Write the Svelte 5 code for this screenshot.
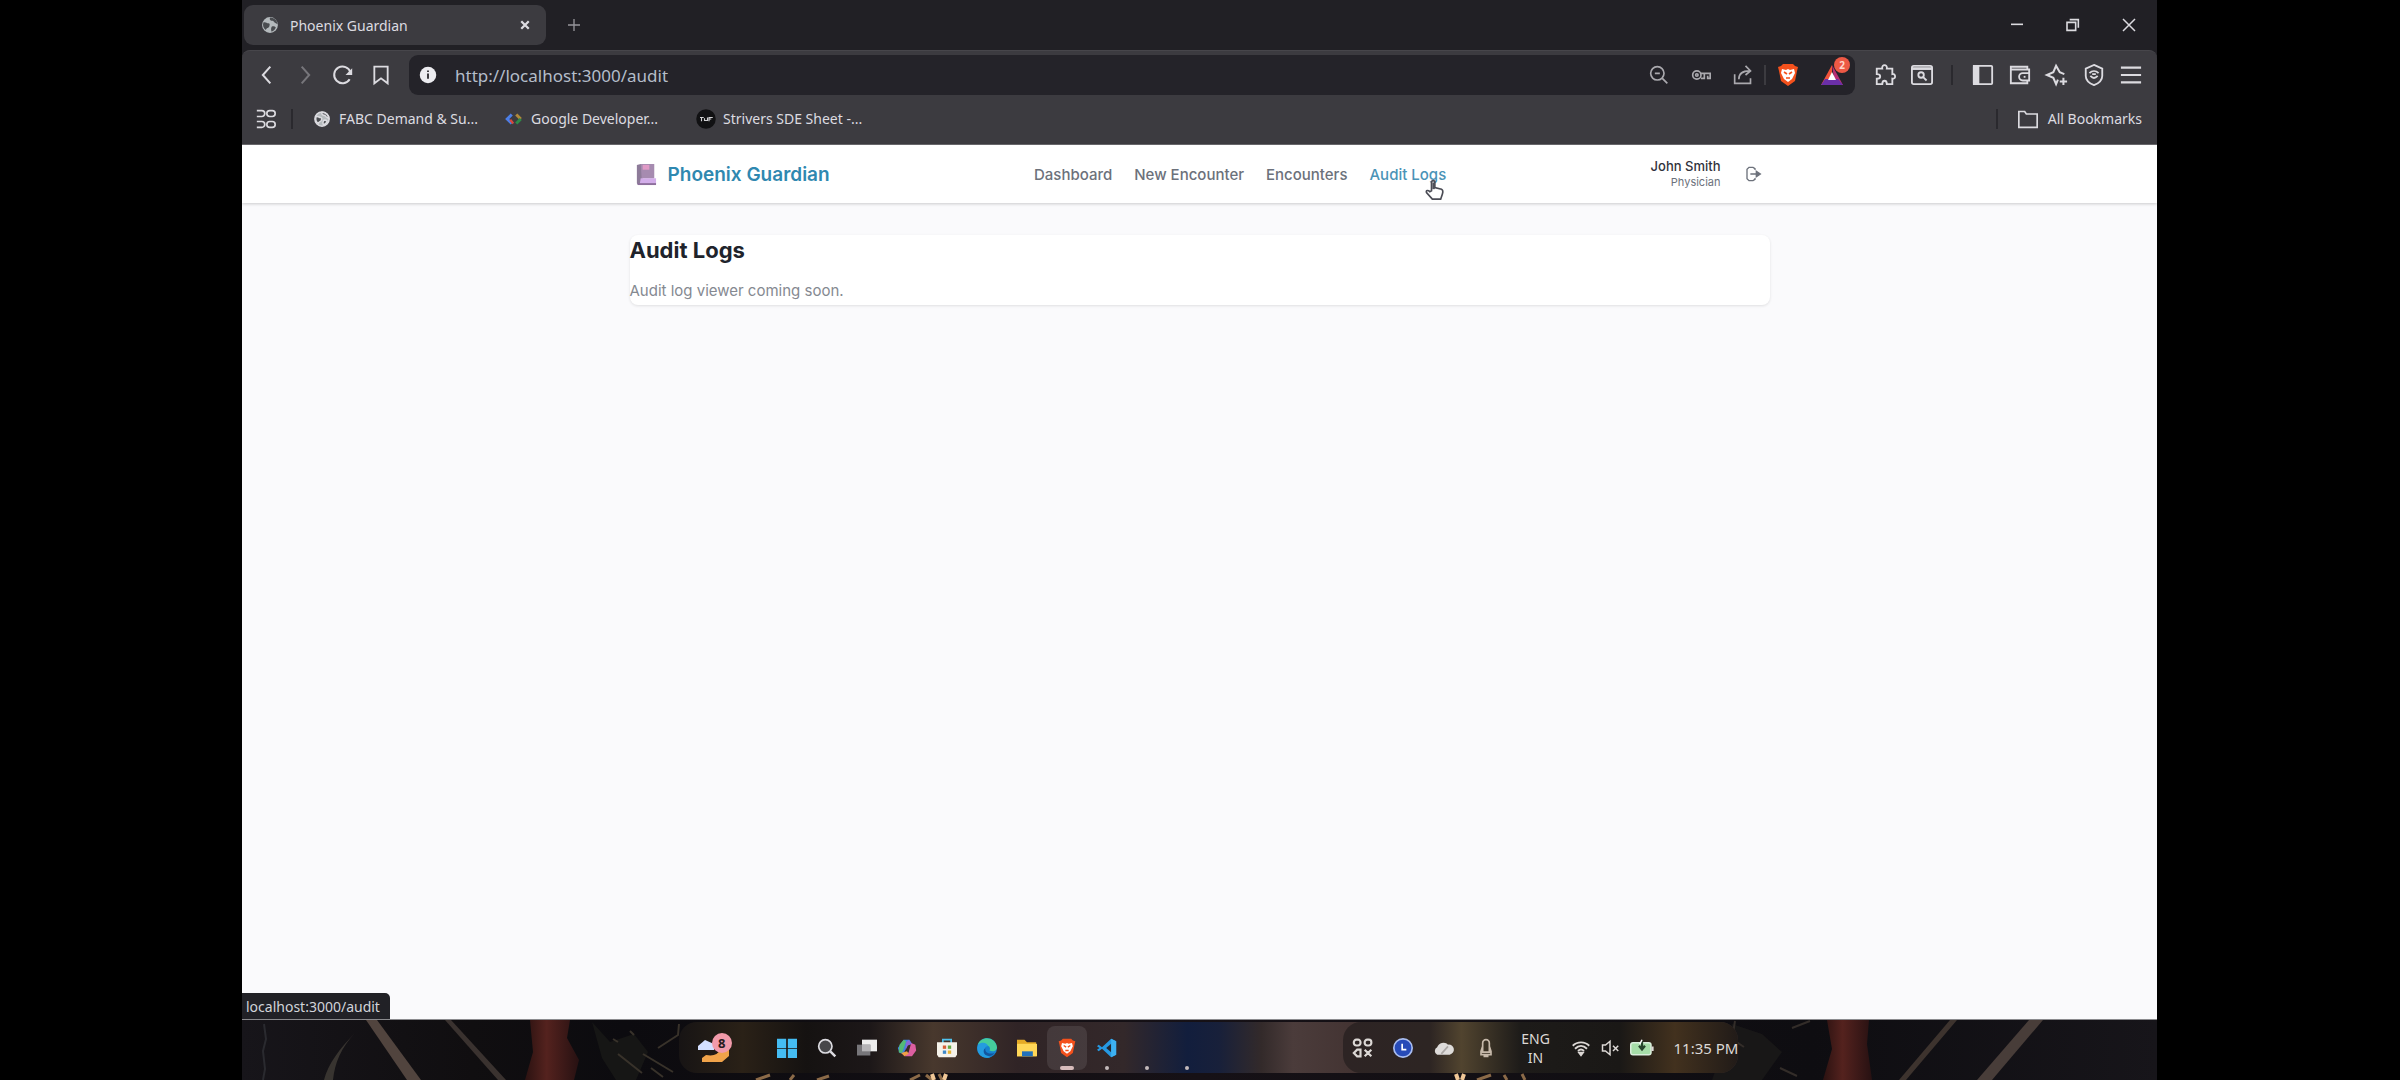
<script lang="ts">
  const tabTitle = 'Phoenix Guardian';
  let address = $state('http://localhost:3000/audit');

  const globe =
    '<circle cx="12" cy="12" r="9.5" fill="#b4b9bc"/><path d="M4 9c3-1 4 1 6 1s2 2 1 4-3 1-4 4c-3-2-4-5-3-9zM12 3c-1 3 1 4 3 4s2 3 4 3l2 1c0-4-4-8-9-8zM14 14c2-1 4 0 5 1-1 3-3 4-5 5-1-2-1-4 0-6z" fill="#4a4c50"/>';

  const icons: Record<string, string> = {
    globe,
    close: '<path d="M7 7l10 10M17 7L7 17" stroke-width="3"/>',
    plus: '<path d="M12 3v18M3 12h18" stroke-width="2"/>',
    minimize: '<path d="M3 11h18" stroke-width="2.4"/>',
    restore: '<path d="M3 8h13v12H3zM7 4h13v12" stroke-width="2.4"/>',
    exit: '<path d="M3 3l18 18M21 3L3 21" stroke-width="2.2"/>',
    back: '<path d="M16 2L7 12l9 10" stroke-width="2.4"/>',
    forward: '<path d="M8 2l9 10-9 10" stroke-width="2.4"/>',
    reload: '<path d="M20 17a10 10 0 1 1 1-8" stroke-width="2.4"/><path d="M23 4v8h-8z" fill="currentColor" stroke="none"/>',
    bookmark: '<path d="M4 2h16v20l-8-6-8 6z" stroke-width="2.2"/>',
    info: '<circle cx="12" cy="12" r="11" fill="#ececf0" stroke="none"/><path d="M12 10v7M12 6v2" stroke="#28272c" stroke-width="2.4"/>',
    apps: '<path d="M1 2h6a3.5 3.5 0 0 1 0 7H1M1 15h6a3.5 3.5 0 0 1 0 7H1"/><rect x="13" y="2" width="10" height="7" rx="3.5"/><rect x="13" y="15" width="10" height="7" rx="3.5"/>',
    code: '<path d="M9 6l-6 6 6 6" stroke="#4c7fe8" stroke-width="4"/><path d="M7 13l4 5" stroke="#d8483c" stroke-width="3"/><path d="M15 6l6 6" stroke="#b08a3a" stroke-width="4"/><path d="M21 12l-6 6" stroke="#2d8a48" stroke-width="4"/>',
    tuf: '<circle cx="12" cy="12" r="13" fill="#111113" stroke="none"/><path d="M4 10h5M6 10v5M10 11v3h4v-4M16 15v-5h5M16 12h3" stroke="#d0d0d2" stroke-width="1.5"/>',
    zoom: '<circle cx="10" cy="10" r="8"/><path d="M16 16l6 6M7 10h6"/>',
    key: '<circle cx="7" cy="12" r="5"/><circle cx="7" cy="12" r="1.5"/><path d="M12 10h11v6h-3v-3M16 10v6h-4"/>',
    share: '<path d="M2 11v11h19v-6M7 17c0-7 4-10 13-10M15 1l6 6-6 5"/>',
    brave: '<path d="M7 1h10l2 2 3 1-1 4-2 10-7 5-7-5L3 8 2 4l3-1z" fill="#f4511c" stroke="none"/><path d="M6 6l4 1 2-1 2 1 4-1 1 4-3 6-4 3-4-3-3-6z" fill="#fff" stroke="none"/><path d="M8 9l3 2M16 9l-3 2M10 15h4" stroke="#f4511c" stroke-width="1.6"/>',
    bat: '<path d="M12 2L1 22h11z" fill="#f2533a" stroke="none"/><path d="M12 2l11 20h-8z" fill="#b82f74" stroke="none"/><path d="M1 22h22l-5-6H5z" fill="#6b2fa8" stroke="none"/><path d="M12 9l4 8H8z" fill="#fff" stroke="none"/>',
    puzzle: '<path d="M3 5h6c-1-5 6-5 5 0h6v6c4-1 4 6 0 5v6h-6c0-5-5-5-5 0H3v-6c5 0 5-5 0-5z"/>',
    finder: '<rect x="1" y="2" width="22" height="20" rx="2"/><path d="M1 5h22" stroke-width="3"/><circle cx="11" cy="12" r="3"/><path d="M13 14l4 4"/>',
    panel: '<rect x="2" y="2" width="20" height="20" rx="1"/><path d="M2 2h5v20H2z" fill="currentColor"/>',
    wallet: '<path d="M20 7V3H2v18h18v-3M2 6h20v3M22 18h-7a4 4 0 0 1 0-8h7z"/><path d="M16 14h2"/>',
    spark: '<path d="M20 11l-5-2-4-7-3 7-7 3 7 3 3 7 2-5M19 15v8M15 19h8" stroke-width="2.2"/>',
    shield: '<path d="M12 1l9 4v8c0 5-4 8-9 10-5-2-9-5-9-10V5z"/><path d="M7 10c3-3 7-3 10 0M8 13c3 3 5 3 8 0M10 11h4"/>',
    menu: '<path d="M1 4h22M1 12h22M1 20h22" stroke-width="2.4"/>',
    folder: '<path d="M1 3h7l2 3h13v16H1z"/>',
    book: '<path d="M3 2l4-1h14v15H9v6l-5 1-1-2z" fill="#8d7b99" stroke="none"/><path d="M7 1h14v15H8z" fill="#a68bb0" stroke="none"/><path d="M9 2h7v5H9z" fill="#e09ac6" stroke="none"/><path d="M7 16h16v6H6z" fill="#d3aeea" stroke="none"/><path d="M4 22h19" stroke="#8d6f9c"/>',
    logout: '<path d="M15 6V4l-3-2H6L3 5v14l3 3h6l3-2v-2M8 12h13"/><path d="M17 8l6 4-6 4z" fill="currentColor"/>',
    windows: '<g stroke="none" fill="#45bdf3"><path d="M0 1h11v11H0zM13 1h11v11H13zM0 13h11v11H0zM13 13h11v11H13z"/></g>',
    search: '<circle cx="10" cy="10" r="8" fill="#47474a"/><path d="M16 16l6 6" stroke-width="3"/>',
    tasks: '<path d="M6 2h18v14H6z" fill="#eee" stroke="none"/><path d="M0 8h16v13H0z" fill="#77767a" stroke="none"/><path d="M6 8h10v8H6z" fill="#b5b4b7" stroke="none"/>',
    copilot: '<g stroke="none"><path d="M8 2h7l3 5-6 2-4 10-5-1-2-6z" fill="#3e83dd"/><path d="M3 8l5-6 3 2-5 14-4-1z" fill="#54b976"/><path d="M17 6l5 2 1 7-5 7H9l5-5z" fill="#dc5ea0"/><path d="M9 22l-4-4 7-2 2 3z" fill="#efa047"/><path d="M14 2l4 5-5 2-3 6 1-10z" fill="#8865d8"/></g>',
    store: '<path d="M7 6V2h10v4" stroke="#4fc3ef"/><path d="M0 5h24v15l-2 3H2l-2-3z" fill="#f5f2ea" stroke="none"/><path d="M7 9h4v4H7z" fill="#d65f38" stroke="none"/><path d="M13 9h4v4h-4z" fill="#65a844" stroke="none"/><path d="M7 15h4v4H7z" fill="#3d88c9" stroke="none"/><path d="M13 15h4v4h-4z" fill="#e5b437" stroke="none"/>',
    edge: '<g stroke="none"><circle cx="12" cy="12" r="12" fill="#1683d0"/><path d="M1 8C5-3 22-2 24 11c0 5-6 6-9 4 3-6-6-9-14-7z" fill="#45cd9d"/><path d="M1 8c5-4 12-2 12 2-6 0-5 10 3 13C6 26-2 18 1 8z" fill="#249ce0"/><path d="M10 12c-1 6 5 8 11 6-4 6-13 4-13-2 0-2 1-3 2-4z" fill="#12559d"/></g>',
    files: '<g stroke="none"><path d="M0 2h9l3 3h11v17H0z" fill="#e5aa26"/><path d="M0 7h24v15H0z" fill="#ffd758"/><path d="M6 16h13v6H6z" fill="#2271ba"/></g>',
    vscode: '<path d="M17 1l6 3v16l-6 3L6 13l-4 3-2-2 3-2-3-2 2-2 4 3z" fill="#2699e3" stroke="none"/><path d="M17 7v10l-6-5z" fill="#24272f" stroke="none"/><path d="M17 1l6 3v16l-6 3z" fill="#3db1f2" stroke="none"/>',
    grid: '<g stroke-width="2.6"><rect x="1" y="2" width="8" height="7" rx="3"/><rect x="14" y="2" width="8" height="7" rx="3"/><path d="M9 14v8H5l-4-4 4-4zM14 14l8 8M22 14l-8 8"/></g>',
    clock: '<circle cx="12" cy="12" r="11" fill="#274bb8" stroke="#a9bdf0"/><path d="M11 7v7h5" stroke="#fff"/>',
    cloud: '<path d="M5 20a5 5 0 0 1 0-9 8 8 0 0 1 13-3 6 6 0 0 1 2 12z" fill="#dedcda" stroke="none"/><path d="M10 19l8-9" stroke="#aaa6a4"/>',
    mic: '<path d="M8 6a4 4 0 0 1 8 0v11H8zM8 10l-2 6v4h12v-4l-2-6M10 20v2h4v-2"/>',
    wifi: '<path d="M1 9c6-6 16-6 22 0M4 13c5-5 11-5 16 0M8 16c3-3 5-3 8 0" stroke-width="2.5"/><path d="M9 18l3 4 3-4z" fill="currentColor"/>',
    mute: '<path d="M2 8h4l6-5v18l-6-5H2zM16 9l7 7M23 9l-7 7"/>',
    battery: '<rect x="0" y="5" width="27" height="16" rx="3" fill="#a6dda8" stroke="#d9eedb"/><path d="M29 10v6" stroke-width="3"/><path d="M15 3v9M11 9l4 5 4-5" stroke="#26442b" stroke-width="3"/><path d="M15 1l-3 6" stroke="#fff"/>',
    hand: '<path d="M9 13V3c0-3 4-3 4 0v6l8 2c2 1 2 3 1 6l-2 6H10l-7-8c-1-3 2-3 4-1z" fill="#fff" stroke="#4b4c55"/><path d="M10 3h3v8h-3z" fill="#50515a" stroke="none"/>'
  };

  const bookmarks = [
    { icon: 'globe', label: 'FABC Demand & Su...' },
    { icon: 'code', label: 'Google Developer...' },
    { icon: 'tuf', label: 'Strivers SDE Sheet -...' }
  ];
  const links = ['Dashboard', 'New Encounter', 'Encounters', 'Audit Logs'];
  const pinned = ['windows', 'search', 'tasks', 'copilot', 'store', 'edge', 'files', 'brave', 'vscode'];
  const panelTools = ['panel', 'wallet', 'spark', 'shield', 'menu'];
</script>

{#snippet icon(name: string)}
  <svg class="icon" class:wide={name === 'battery'} viewBox={name === 'battery' ? '-1 0 32 24' : '0 0 24 24'} aria-hidden="true">{@html icons[name]}</svg>
{/snippet}

<div class="screen">
  <div class="browser">
    <div class="tabs">
      <div class="tab">
        {@render icon('globe')}
        <span>{tabTitle}</span>
        <button class="mini" aria-label="Close tab">{@render icon('close')}</button>
      </div>
      <button class="mini new" aria-label="New tab">{@render icon('plus')}</button>
      <div class="controls">
        <button aria-label="Minimize">{@render icon('minimize')}</button>
        <button aria-label="Restore">{@render icon('restore')}</button>
        <button aria-label="Close">{@render icon('exit')}</button>
      </div>
    </div>

    <div class="chrome">
      <div class="toolbar">
        <div class="history">
          <button aria-label="Back">{@render icon('back')}</button>
          <button class="dim" aria-label="Forward">{@render icon('forward')}</button>
          <button aria-label="Reload">{@render icon('reload')}</button>
          <button aria-label="Bookmark">{@render icon('bookmark')}</button>
        </div>
        <div class="address">
          <button class="mini" aria-label="Site information">{@render icon('info')}</button>
          <input aria-label="Address" bind:value={address} spellcheck="false" />
          <div class="actions">
            <button aria-label="Zoom">{@render icon('zoom')}</button>
            <button aria-label="Passwords">{@render icon('key')}</button>
            <button aria-label="Share">{@render icon('share')}</button>
          </div>
          <i class="rule soft"></i>
          <button class="logo" aria-label="Brave Shields">{@render icon('brave')}</button>
          <button class="logo" aria-label="Brave Rewards">{@render icon('bat')}<b>2</b></button>
        </div>
        <div class="tools">
          <button aria-label="Extensions">{@render icon('puzzle')}</button>
          <button aria-label="Search tabs">{@render icon('finder')}</button>
        </div>
        <i class="rule"></i>
        <div class="tools">
          {#each panelTools as tool}
            <button aria-label={tool}>{@render icon(tool)}</button>
          {/each}
        </div>
      </div>
      <div class="bookmarks">
        <button class="apps" aria-label="Apps">{@render icon('apps')}</button>
        <i class="rule"></i>
        <div class="saved">
          {#each bookmarks as item}
            <a href="#{item.icon}">{@render icon(item.icon)}{item.label}</a>
          {/each}
        </div>
        <i class="rule"></i>
        <button class="all">{@render icon('folder')}All Bookmarks</button>
      </div>
    </div>

    <div class="page">
      <header>
        <div class="container bar">
          <a class="brand" href="#home">{@render icon('book')}Phoenix Guardian</a>
          <nav>
            {#each links as link}
              <a href="#{link}" class:active={link === 'Audit Logs'}>{link}{#if link === 'Audit Logs'}<span class="pointer">{@render icon('hand')}</span>{/if}</a>
            {/each}
          </nav>
          <div class="account">
            <div class="user"><strong>John Smith</strong><span>Physician</span></div>
            <button aria-label="Log out">{@render icon('logout')}</button>
          </div>
        </div>
      </header>
      <main class="container">
        <section>
          <h1>Audit Logs</h1>
          <p>Audit log viewer coming soon.</p>
        </section>
      </main>
      <div class="status">localhost:3000/audit</div>
    </div>

    <footer>
      <svg class="wallpaper" viewBox="0 0 1915 60" preserveAspectRatio="none" aria-hidden="true">
        <defs>
          <linearGradient id="night">
            <stop offset="0" stop-color="#17151a" /><stop offset=".12" stop-color="#100e10" />
            <stop offset=".2" stop-color="#0c0b0f" /><stop offset=".5" stop-color="#161116" />
            <stop offset=".82" stop-color="#0e0d11" /><stop offset="1" stop-color="#17151a" />
          </linearGradient>
          <linearGradient id="ember"><stop offset="0" stop-color="#2b1211" /><stop offset=".4" stop-color="#54221e" /><stop offset="1" stop-color="#271112" /></linearGradient>
        </defs>
        <rect width="1915" height="60" fill="url(#night)" />
        <path d="M124 0h11l44 60h-14z" fill="#51443e" />
        <path d="M203 0h6l55 60h-8z" fill="#3a322f" />
        <path d="M113 13C98 28 86 44 82 60h9c2-18 8-32 22-47z" fill="#383430" />
        <path d="M22 4l2 15-3 12 2 18-2 11" fill="none" stroke="#2a2a2f" stroke-width="2" />
        <path d="M288 0h40l-3 18 12 22-5 20h-49l8-28z" fill="url(#ember)" />
        <path d="M350 2l18 20 24-8 14 18-12 28h-20l-14-22z" fill="#161615" />
        <path d="M371 19l5 3M388 11l4 4M416 28l20-13 1-11M401 34l30 18M376 34l24 19M409 48l12 9" fill="none" stroke="#38322a" stroke-width="2" />
        <path d="M1708 0h7l-51 60h-7z" fill="#3d332e" />
        <path d="M1787 0h14l-51 60h-15z" fill="#483d39" />
        <path d="M1585 0h42l-2 24 5 36h-49l9-31z" fill="url(#ember)" />
        <path d="M1490 4l30 10 20 18-20 28h-50z" fill="#181717" />
        <path d="M1493 1l-3 18 12 8M1550 8l18-7M1538 48l17 8" fill="none" stroke="#332d29" stroke-width="2" />
        <path d="M514 60l14-5M548 60l4-5M575 60l12-4M668 60l10-5M684 55l6 5M697 54l3 6M1235 60l14-5M1262 55l3 5M1280 54l3 6" fill="none" stroke="#8b6a48" stroke-width="3" />
        <path d="M690 54l2 6M704 54l-2 6M1214 54l2 6M1222 54l-2 6" fill="none" stroke="#f0c796" stroke-width="4" />
      </svg>
      <div class="dock">
        <div class="weather">
          <svg viewBox="0 0 36 32" aria-label="Weather"><path d="M9 23q11 2 14-5h9v6l-7 6H5v-4z" fill="#f0a34a" /><path d="M1 14l7-6 9 4v6H1z" fill="#d4dfff" /><circle cx="25" cy="11" r="10" fill="#f19aaa" /><text x="21" y="16">8</text></svg>
        </div>
        <div class="pinned">
          {#each pinned as app}
            <button class:current={app === 'brave'} class:running={app === 'vscode'} aria-label={app}>{@render icon(app)}</button>
          {/each}
          <button class="running" aria-label="Background app"></button>
          <button class="running" aria-label="Background task"></button>
        </div>
        <div class="tray">
          <button aria-label="Quick apps">{@render icon('grid')}</button>
          <button aria-label="Clock">{@render icon('clock')}</button>
          <button aria-label="Cloud">{@render icon('cloud')}</button>
          <button class="mic" aria-label="Microphone">{@render icon('mic')}</button>
          <button class="language">ENG<br />IN</button>
          <div class="system">{@render icon('wifi')}{@render icon('mute')}{@render icon('battery')}</div>
          <time>11:35 PM</time>
        </div>
      </div>
    </footer>
  </div>
</div>

<style>
  :global(body) { background: #000; }
  * { box-sizing: border-box; }
  button, input { font: inherit; color: inherit; background: none; border: 0; padding: 0; margin: 0; outline: 0; }
  a { color: inherit; text-decoration: none; }
  button { display: flex; align-items: center; justify-content: center; position: relative; flex: none; }
  .icon { display: block; width: 20px; height: 20px; flex: none; fill: none; stroke: currentColor; stroke-width: 2; overflow: visible; }
  .icon.wide { width: 26px; }
  .screen { min-height: 100vh; padding: 0 243px 0 242px; display: flex; background: #000; font-family: "Noto Sans", sans-serif; }
  .browser { flex: 1; min-width: 0; display: flex; flex-direction: column; background: #212025; color: #dcdbe0; font-size: 14px; }

  .tabs { display: flex; align-items: center; height: 50px; padding: 0 0 0 2px; }
  .tab { display: flex; align-items: center; gap: 10px; width: 302px; height: 40px; border-radius: 9px; background: #3c3b40; padding: 0 12px 0 16px; }
  .tab span { flex: 1; }
  .mini .icon { width: 16px; height: 16px; }
  .tab .icon { width: 20px; height: 20px; stroke: none; }
  .tab .mini .icon { width: 18px; height: 18px; stroke: currentColor; }
  .new { margin-left: 20px; color: #96959a; }
  .controls { display: flex; margin-left: auto; }
  .controls button { width: 56px; height: 40px; }
  .controls .icon { width: 16px; height: 16px; }

  .chrome { background: #3c3b40; border-top: 1px solid #47464b; border-bottom: 1px solid #6b6a6e; border-radius: 8px 8px 0 0; }
  .toolbar { display: flex; align-items: center; height: 48px; padding: 0 8px 0 6px; }
  .history { display: flex; width: 161px; }
  .history button { width: 38px; }
  .dim { color: #77767b; }
  .address { flex: 1; min-width: 0; display: flex; align-items: center; height: 40px; padding: 0 1px 0 10px; border-radius: 9px; background: #242329; }
  .address .mini .icon { width: 18px; height: 18px; }
  .address input { flex: 1; min-width: 0; margin-left: 18px; font-size: 17px; color: #b4bdc9; }
  .actions { display: flex; color: #aaa9ae; }
  .actions button { width: 42px; }
  .rule { width: 2px; height: 20px; background: #2a292e; flex: none; }
  .rule.soft { background: #3c3b40; }
  .logo { width: 44px; }
  .logo .icon { width: 24px; height: 24px; }
  .logo b { position: absolute; top: -6px; right: 4px; width: 16px; height: 16px; border-radius: 50%; background: #ed5945; color: #ffd5cc; font-size: 10px; line-height: 16px; text-align: center; }
  .tools { display: flex; margin: 0 11px; }
  .tools button { width: 37px; }
  .tools .icon { width: 22px; height: 22px; }
  .tools:last-child { margin-right: 0; }

  .bookmarks { display: flex; align-items: center; height: 45px; padding: 0 15px 6px 13px; }
  .apps { width: 22px; margin-right: 14px; }
  .saved { flex: 1; display: flex; margin-left: 20px; }
  .saved a { display: flex; align-items: center; gap: 8px; width: 192px; white-space: nowrap; }
  .saved .icon { width: 18px; height: 18px; }
  .all { gap: 10px; margin-left: 20px; }

  .page { flex: 1; position: relative; background: #fafafc; border-bottom: 1px solid #8b8b8e; font-family: Inter, sans-serif; color: #6c717b; }
  .container { max-width: 1140px; margin: 0 auto; }
  header { background: #fff; box-shadow: 0 1px 3px #00000030; }
  .bar { display: flex; align-items: center; justify-content: space-between; height: 58px; padding: 0 9px 0 4px; }
  .brand { display: flex; align-items: center; gap: 11px; color: #2f88b0; font-size: 19px; font-weight: 600; }
  .brand .icon { width: 23px; height: 23px; }
  nav { display: flex; gap: 22px; font-size: 15px; font-weight: 500; }
  nav a { position: relative; }
  .active { color: #4a93b7; }
  .pointer { position: absolute; right: 2px; top: 14px; }
  .pointer .icon { width: 20px; height: 22px; }
  .account { display: flex; align-items: center; gap: 24px; }
  .user { text-align: right; display: flex; flex-direction: column; font-size: 11px; line-height: 16px; }
  .user strong { font-size: 13px; font-weight: 500; color: #30323c; }
  .account .icon { width: 16px; height: 16px; }
  section { margin-top: 32px; padding: 0 0 4px; background: #fff; border-radius: 8px; box-shadow: 0 1px 3px #0000001c; }
  h1 { margin: 0; font-size: 22px; line-height: 30px; font-weight: 700; color: #20232b; }
  p { margin: 16px 0 0; font-size: 15px; line-height: 20px; color: #858991; }
  .status { position: absolute; left: 0; bottom: 0; height: 26px; padding: 0 10px 0 4px; border-radius: 0 5px 0 0; background: #212126; color: #d2d4da; font: 14px/28px "Noto Sans", sans-serif; }

  footer { position: relative; height: 60px; padding-top: 2px; display: flex; justify-content: center; overflow: hidden; }
  .wallpaper { position: absolute; inset: 0; width: 100%; height: 100%; }
  .dock { position: relative; display: flex; align-items: center; height: 51px; padding-left: 18px; margin-left: 18px; border-radius: 18px; background: linear-gradient(90deg, #171414 0, #2a2117 6%, #151211 12%, #1c1718 18%, #48382d 24%, #302426 32%, #33282a 42%, #121e3d 48%, #18203a 51%, #332a2a 55%, #4b3c3b 58%, #40302f 66%, #332829 100%); }
  .weather { width: 70px; }
  .weather svg { display: block; width: 36px; height: 32px; }
  .weather text { font: 700 13px "Noto Sans", sans-serif; fill: #28191d; }
  .pinned { display: flex; }
  .pinned button { width: 40px; height: 44px; }
  .pinned .icon { width: 20px; height: 20px; }
  .current { border-radius: 8px; background: #ffffff18; }
  .current::after, .running::after { content: ""; position: absolute; bottom: 0; left: 50%; width: 4px; height: 4px; margin-left: -2px; border-radius: 2px; background: #c3babb; }
  .current::after { width: 14px; margin-left: -7px; background: #d7bcbb; }
  .tray { display: flex; align-items: center; height: 51px; margin-left: 136px; border-radius: 18px; color: #dcd8d5; background: linear-gradient(90deg, #2d2424 0, #2d2523 22%, #51442f 30%, #1d1b19 45%, #1a1816 70%, #42311e 84%, #211b18 100%); }
  .tray button { width: 40px; }
  .tray .mic { width: 46px; color: #c6b9aa; }
  .tray .language { width: 54px; font-size: 14px; line-height: 19px; text-align: center; }
  .system { display: flex; align-items: center; gap: 9px; margin-left: 8px; }
  .system .icon { height: 18px; }
  time { margin-left: 19px; font-size: 15px; white-space: nowrap; }
</style>
